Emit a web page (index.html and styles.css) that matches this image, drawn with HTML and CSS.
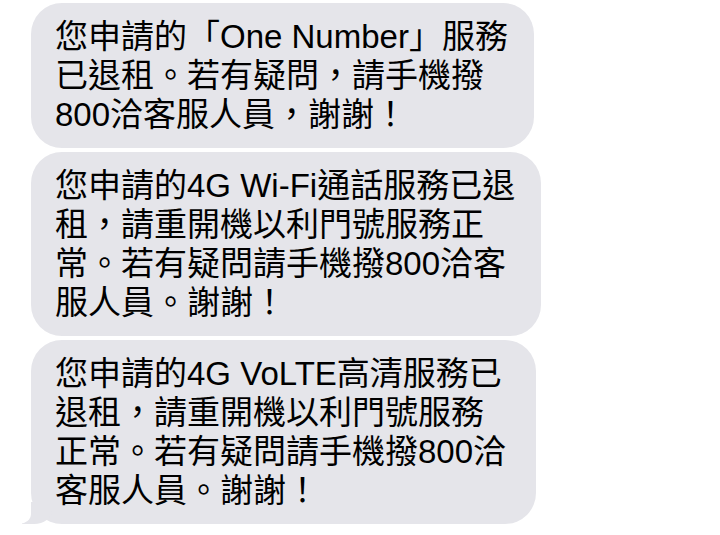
FILE: index.html
```html
<!DOCTYPE html>
<html lang="zh-Hant">
<head>
  <meta charset="UTF-8" />
  <meta name="viewport" content="width=device-width, initial-scale=1.0"/>
  <title>訊息</title>
  <link rel="stylesheet" href="styles.css">
</head>
<body>
  <main class="thread">
    <div class="bubble">您申請的「One Number」服務<br>已退租。若有疑問，請手機撥<br>800洽客服人員，謝謝！</div>
    <div class="bubble">您申請的4G Wi-Fi通話服務已退<br>租，請重開機以利門號服務正<br>常。若有疑問請手機撥800洽客<br>服人員。謝謝！</div>
    <div class="bubble tail">您申請的4G VoLTE高清服務已<br>退租，請重開機以利門號服務<br>正常。若有疑問請手機撥800洽<br>客服人員。謝謝！</div>
  </main>
</body>
</html>
```

FILE: styles.css
```css
:root {
  --bubble-bg: #e5e5ea;
  --text-color: #000000;
  --page-bg: #ffffff;
}
body {
  margin: 0; background: var(--page-bg); color: var(--text-color);
  font-family: "Liberation Sans", "Noto Sans CJK TC", sans-serif;
}
.thread {
  display: flex; flex-direction: column; align-items: flex-start; gap: 4px;
  padding: 3px 0 0 31px;
}
.bubble {
  position: relative; background: var(--bubble-bg); border-radius: 31px;
  padding: 14px 26px 14px 24px; font-size: 33px; line-height: 39px;
}
.tail { padding-right: 30px; }
.tail::before {
  content: ""; position: absolute; left: -9px; bottom: 0; width: 30px; height: 22px;
  background: var(--bubble-bg); border-bottom-right-radius: 18px 14px;
}
.tail::after {
  content: ""; position: absolute; left: -30px; bottom: 0; width: 30px; height: 24px;
  background: var(--page-bg); border-bottom-right-radius: 12px 10px;
}
```
